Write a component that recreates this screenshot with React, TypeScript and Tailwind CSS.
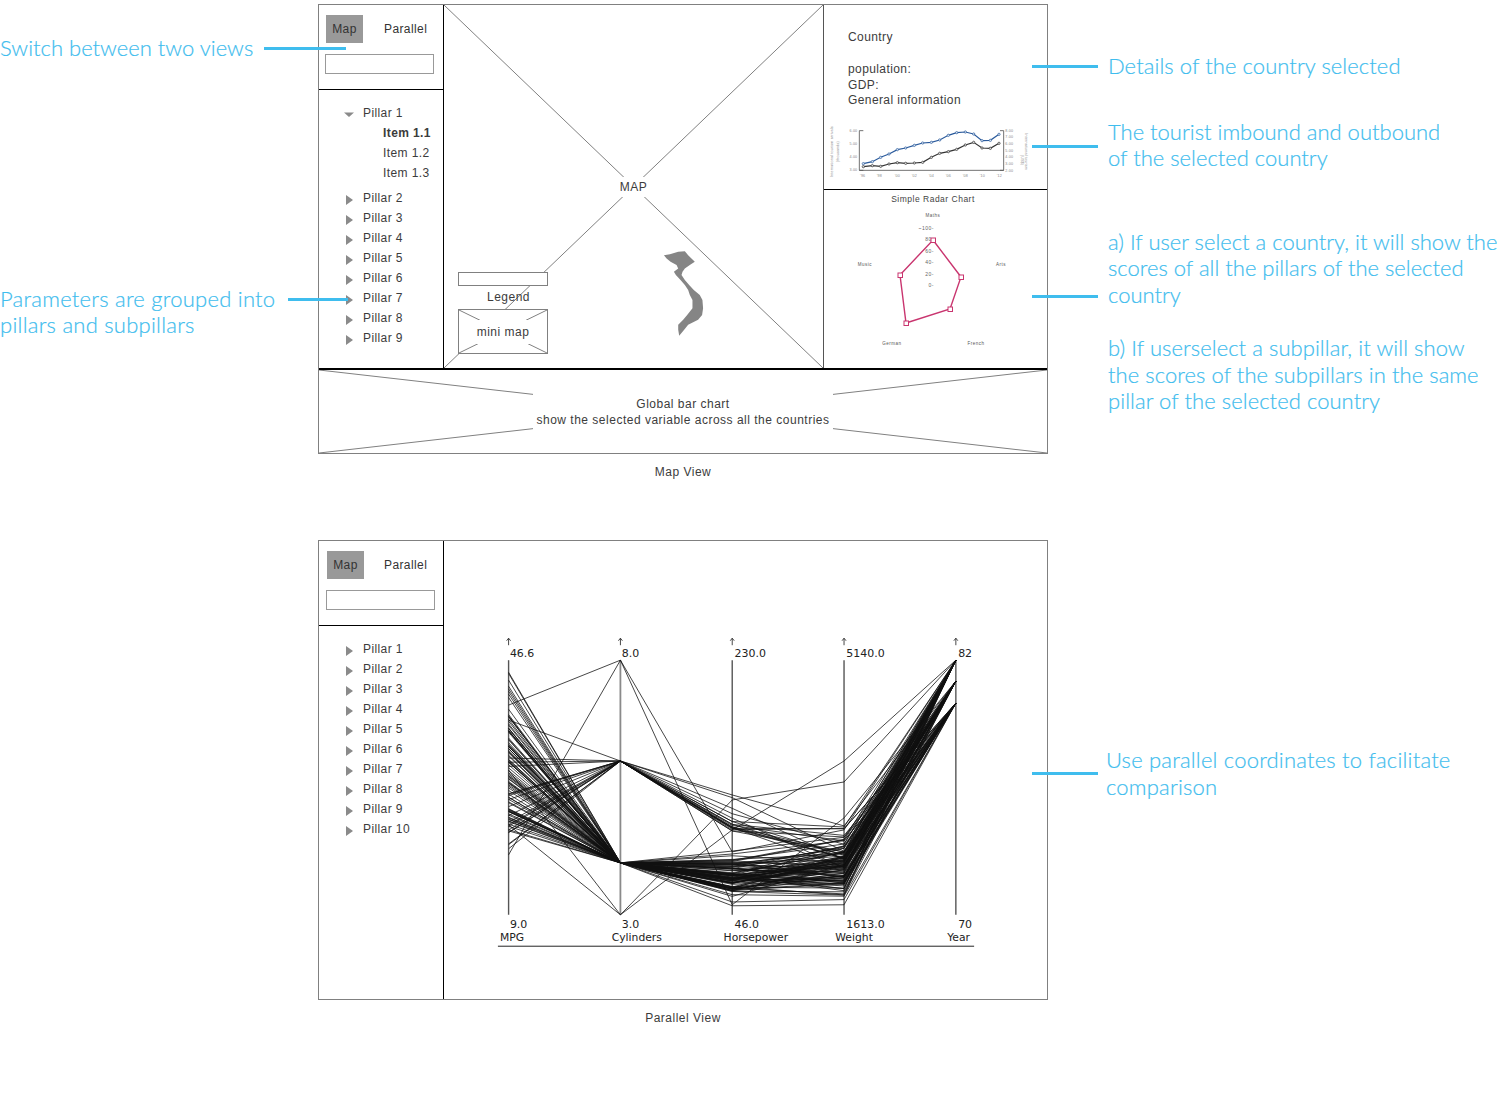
import type { ReactNode } from "react";

const AXES = [508.7, 620.7, 732.7, 844.7, 956.7];

function seeded(seed: number) {
  let a = seed;
  return () => {
    a = (a + 0x6d2b79f5) | 0;
    let t = Math.imul(a ^ (a >>> 15), 1 | a);
    t = (t + Math.imul(t ^ (t >>> 7), 61 | t)) ^ t;
    return ((t ^ (t >>> 14)) >>> 0) / 4294967296;
  };
}

// fake car data, pixel y per axis
function buildLines() {
  const rnd = seeded(41);
  const between = (a: number, b: number) => a + (b - a) * rnd();
  const years = [660, 681, 703];
  const lines: number[][] = [];
  for (let i = 0; i < 92; i++) {
    const hp = rnd() < 0.7 ? between(860, 892) : between(845, 906);
    const mpg = i % 12 === 0 ? between(672, 712) : between(712, 832);
    lines.push([mpg, 863, hp, hp * 0.7 + 258 + between(-24, 20), years[i % 3]]);
  }
  for (let i = 0; i < 18; i++) {
    const hp = i % 3 === 0 ? between(796, 822) : between(824, 832);
    const mpg = i < 3 ? between(756, 770) : between(790, 852);
    lines.push([mpg, 761, hp, between(820, 868), years[i % 3]]);
  }
  lines.push([855, 660, 852, 830, 660]);
  lines.push([705, 660, 905, 818, 681]);
  lines.push([770, 915, 830, 761, 660]);
  lines.push([825, 915, 800, 782, 660]);
  lines.push([720, 761, 795, 826, 681]);
  lines.push([680, 863, 906, 905, 703]);
  return lines;
}

const PARALLEL_LINES = buildLines();

function Cross() {
  return (
    <svg className="absolute inset-0 h-full w-full" viewBox="0 0 100 100" preserveAspectRatio="none">
      <line x1="0" y1="0" x2="100" y2="100" stroke="#808080" vectorEffect="non-scaling-stroke" />
      <line x1="100" y1="0" x2="0" y2="100" stroke="#808080" vectorEffect="non-scaling-stroke" />
    </svg>
  );
}

function Triangle({ open }: { open?: boolean }) {
  return (
    <svg width="10" height="10" viewBox="0 0 10 10" className="mt-[3px] shrink-0">
      {open ? <path d="M0 2.5h10L5 7z" fill="#8a8a8a" /> : <path d="M2 0l7 5-7 5z" fill="#8a8a8a" />}
    </svg>
  );
}

function PillarRow({ label, open }: { label: string; open?: boolean }) {
  return (
    <div className="flex h-5 items-center gap-[9px] pl-[25px]">
      <Triangle open={open} />
      <span>{label}</span>
    </div>
  );
}

function SideHeader({ shift, gap }: { shift: string; gap: string }) {
  return (
    <div className={`h-[85px] border-b border-black pt-[10px] ${shift}`}>
      <div className="flex h-7 items-center pl-[1px]">
        <div className="flex h-7 w-[37px] items-center justify-center bg-[#999999] text-[#333]">Map</div>
        <span className={`text-[#333] ${gap}`}>Parallel</span>
      </div>
      <div className="mt-[11px] h-5 w-[109px] border border-[#999999] bg-white" />
    </div>
  );
}

function Caption({ children }: { children: ReactNode }) {
  return <p className="mt-2 text-center">{children}</p>;
}

function Note({ children, className, lineClass }: { children: ReactNode; className?: string; lineClass?: string }) {
  return (
    <div className={`relative ${className ?? ""}`}>
      {children}
      {lineClass && <span className={`absolute z-10 h-[3px] bg-[#3fbdee] ${lineClass}`} />}
    </div>
  );
}

function VietnamShape() {
  return (
    <svg width="73" height="100" viewBox="0 0 220 300" className="absolute left-[206px] top-[235px]">
      <path
        d="M85 35 105 33 115 45 125 55 135 65 120 75 105 85 98 95 95 105 105 120 118 135 132 150 150 165 158 180 160 205 157 225 145 240 115 255 103 270 88 288 85 270 85 255 100 240 112 225 128 205 128 180 120 165 115 150 105 135 92 120 78 105 72 95 85 85 80 75 62 65 50 55 42 45 60 42Z"
        fill="#858585"
      />
    </svg>
  );
}

function LineChart() {
  const blue = "130,161 157,155 182,142 207,132 232,119 257,114 283,106 308,99 334,97 359,90 385,76 410,68 436,66 461,72 486,92 511,91 537,73";
  const black = "130,170 157,167 182,169 207,162 232,158 257,160 283,159 308,157 334,142 359,130 385,125 410,118 436,105 461,97 486,114 511,115 537,100";
  const pts = (s: string) => s.split(" ").map((p) => p.split(",").map(Number));
  return (
    <svg viewBox="0 0 672 210" width="224" height="70" className="block">
      {/* drawn in 3x crop units, y is offset by 27 */}
      <g transform="translate(-12 -27)" fontSize="11" fill="#888" fontFamily="Liberation Sans, sans-serif">
        <path d="M130 62h-12v119h12M540 62h11v119h-11" fill="none" stroke="#555" strokeWidth="2.5" />
        <path d="M118 181H551" stroke="#555" strokeWidth="2.5" />
        <polyline points={blue} fill="none" stroke="#2a5a9c" strokeWidth="3.5" />
        <polyline points={black} fill="none" stroke="#333" strokeWidth="3.5" />
        {pts(blue).map(([x, y]) => (
          <circle key={x} cx={x} cy={y} r="3.5" fill="#dce6f2" stroke="#2a5a9c" strokeWidth="2" />
        ))}
        {pts(black).map(([x, y]) => (
          <circle key={x} cx={x} cy={y} r="3.5" fill="#ddd" stroke="#333" strokeWidth="2" />
        ))}
        {[["6.00", 65], ["5.00", 105], ["4.00", 145], ["3.00", 184]].map(([t, y]) => (
          <text key={t} x="112" y={y} textAnchor="end">{t}</text>
        ))}
        {[["8.00", 65], ["7.00", 85], ["6.00", 105], ["5.00", 125], ["4.00", 145], ["3.00", 165], ["2.00", 185]].map(([t, y]) => (
          <text key={y} x="556" y={y}>{t}</text>
        ))}
        {[["'96", 128], ["'98", 178], ["'00", 232], ["'02", 283], ["'04", 334], ["'06", 385], ["'08", 436], ["'10", 487], ["'12", 538]].map(([t, x]) => (
          <text key={x} x={x} y="202" textAnchor="middle">{t}</text>
        ))}
        <text transform="translate(40 125) rotate(-90)" textAnchor="middle">International tourism arrivals</text>
        <text transform="translate(57 125) rotate(-90)" textAnchor="middle">(thousands)</text>
        <text transform="translate(616 125) rotate(90)" textAnchor="middle">International tourism</text>
        <text transform="translate(602 150) rotate(90)" textAnchor="middle">(US$)</text>
      </g>
    </svg>
  );
}

function RadarChart() {
  const shape = [[933, 240], [961, 277], [950, 309], [906, 323], [900, 275]];
  const ticks = [["100", 230], ["80", 241], ["60", 253], ["40", 264], ["20", 276], ["0", 287]];
  const labels = [["Maths", 933, 217], ["Arts", 1001, 266], ["French", 976, 345], ["German", 892, 345], ["Music", 865, 266]];
  return (
    <svg viewBox="824 190 224 178" width="224" height="178" className="block" fontFamily="Liberation Sans, sans-serif">
      <text x="933" y="202" fontSize="8.5" fill="#444" textAnchor="middle">Simple Radar Chart</text>
      {labels.map(([t, x, y]) => (
        <text key={t} x={x} y={y} fontSize="4.5" fill="#555" textAnchor="middle">{t}</text>
      ))}
      {ticks.map(([t, y]) => (
        <text key={t} x="934" y={y} fontSize="5" fill="#666" textAnchor="end">{t === "100" ? "~100" : t}-</text>
      ))}
      <polygon points={shape.map((p) => p.join(",")).join(" ")} fill="none" stroke="#c9356f" strokeWidth="1.4" />
      {shape.map(([x, y]) => (
        <rect key={x} x={x - 2} y={y - 2} width="4.5" height="4.5" fill="#fff" stroke="#c9356f" />
      ))}
    </svg>
  );
}

function ParallelChart() {
  const top = [["46.6", 510], ["8.0", 622], ["230.0", 735], ["5140.0", 847], ["82", 959]];
  const low = [["9.0", 510, "MPG", 500], ["3.0", 622, "Cylinders", 612], ["46.0", 735, "Horsepower", 724], ["1613.0", 847, "Weight", 836], ["70", 959, "Year", 948]];
  return (
    <svg viewBox="444 541 604 458" width="604" height="458" className="block tracking-normal" fontFamily="DejaVu Sans, sans-serif">
      {AXES.map((x, i) => (
        <g key={x}>
          <line x1={x} x2={x} y1="660" y2="915" stroke={i === 1 ? "#8a8a8a" : "#555"} strokeWidth={i === 1 ? 1.8 : 1.4} />
          <path d={`M${x} 645v-7m-2 2.5l2-2.5 2 2.5`} fill="none" stroke="#333" strokeWidth="0.9" />
        </g>
      ))}
      {PARALLEL_LINES.map((ys, i) => (
        <polyline
          key={i}
          points={ys.map((y, k) => `${AXES[k]},${y.toFixed(1)}`).join(" ")}
          fill="none"
          stroke="#111"
          strokeOpacity="0.78"
          strokeWidth="1"
        />
      ))}
      {top.map(([t, x]) => (
        <text key={t} x={x} y="657" fontSize="11" fill="#222">{t}</text>
      ))}
      {low.map(([t, x, name, nx]) => (
        <g key={t}>
          <text x={x} y="928" fontSize="11" fill="#222">{t}</text>
          <text x={nx} y="941" fontSize="10.8" fill="#222">{name}</text>
        </g>
      ))}
      <line x1="498" x2="975" y1="946.5" y2="946.5" stroke="#222" />
    </svg>
  );
}

function MapFrame() {
  const pillars = ["Pillar 2", "Pillar 3", "Pillar 4", "Pillar 5", "Pillar 6", "Pillar 7", "Pillar 8", "Pillar 9"];
  return (
    <div className="h-[450px] w-[730px] border border-[#808080]">
      <div className="flex h-[365px] border-b-2 border-black">
        {/* sidebar */}
        <div className="w-[125px] shrink-0 border-r border-black tracking-[0.4px]">
          <SideHeader shift="pl-[6px]" gap="ml-[21px]" />
          <div className="pt-[13px]">
            <PillarRow label="Pillar 1" open />
            <div className="flex h-5 items-center pl-[64px] font-bold">Item 1.1</div>
            <div className="flex h-5 items-center pl-[64px]">Item 1.2</div>
            <div className="flex h-5 items-center pl-[64px]">Item 1.3</div>
            <div className="mt-[5px]">
              {pillars.map((p) => (
                <PillarRow key={p} label={p} />
              ))}
            </div>
          </div>
        </div>

        {/* map */}
        <div className="relative flex flex-1 items-center justify-center">
          <Cross />
          <div className="relative bg-white px-[4px]">MAP</div>
          <VietnamShape />
          <div className="absolute left-[14px] top-[267px] h-[14px] w-[90px] border border-[#808080] bg-white" />
          <span className="absolute left-[43px] top-[284px] leading-4">Legend</span>
          <div className="absolute left-[14px] top-[304px] flex h-[45px] w-[90px] items-center justify-center border border-[#808080] bg-white">
            <Cross />
            <span className="relative bg-white px-[2px] py-[2px]">mini map</span>
          </div>
        </div>

        {/* country */}
        <div className="flex w-[224px] shrink-0 flex-col border-l border-[#555]">
          <div className="flex h-[185px] flex-col border-b border-black">
            <div className="pl-[24px] pt-[24px] leading-4 tracking-[0.4px]">
              <p>Country</p>
              <p className="mt-4">population:</p>
              <p>GDP:</p>
              <p className="-mt-[1px]">General information</p>
            </div>
            <div className="mt-auto">
              <LineChart />
            </div>
          </div>
          <RadarChart />
        </div>
      </div>

      <div className="relative flex h-[83px] items-center justify-center">
        <Cross />
        <div className="relative w-[300px] bg-white py-[3px] text-center leading-4">
          <p>Global bar chart</p>
          <p>show the selected variable across all the countries</p>
        </div>
      </div>
    </div>
  );
}

function ParallelFrame() {
  const pillars = ["Pillar 1", "Pillar 2", "Pillar 3", "Pillar 4", "Pillar 5", "Pillar 6", "Pillar 7", "Pillar 8", "Pillar 9", "Pillar 10"];
  return (
    <div className="flex h-[460px] w-[730px] border border-[#808080]">
      <div className="w-[125px] shrink-0 border-r border-black tracking-[0.4px]">
        <SideHeader shift="pl-[7px]" gap="ml-5" />
        <div className="pt-[13px]">
          {pillars.map((p) => (
            <PillarRow key={p} label={p} />
          ))}
        </div>
      </div>
      <ParallelChart />
    </div>
  );
}

export default function App() {
  return (
    <div className="h-[1100px] w-[1500px] overflow-hidden bg-white pt-[4px] font-['Liberation_Sans',Arial,sans-serif] text-[12px] leading-5 tracking-[0.5px] text-[#3c3c3c]">
      {/* map view */}
      <div className="flex h-[536px]">
        <aside className="w-[318px] shrink-0 font-[Lato,sans-serif] text-[22px] font-light leading-[26.5px] tracking-normal text-[#3fbdee] [-webkit-text-stroke:0.2px_#3fbdee]">
          <Note className="mt-[31px]" lineClass="left-[264px] top-[12px] w-[82px]">
            Switch between two views
          </Note>
          <Note className="mt-[224px] tracking-[0.25px]" lineClass="left-[288px] top-[12px] w-[60px]">
            <p>Parameters are grouped into</p>
            <p>pillars and subpillars</p>
          </Note>
        </aside>
        <div className="relative w-[730px] shrink-0">
          <MapFrame />
          <Caption>Map View</Caption>
        </div>
        <aside className="pl-[60px] font-[Lato,sans-serif] text-[22px] font-light leading-[26.5px] tracking-normal text-[#3fbdee] [-webkit-text-stroke:0.2px_#3fbdee]">
          <Note className="mt-[49px] tracking-[0.07px]" lineClass="left-[-76px] top-[12px] w-[66px]">
            Details of the country selected
          </Note>
          <Note className="mt-[39px]" lineClass="left-[-76px] top-[26px] w-[66px]">
            <p>The tourist imbound and outbound</p>
            <p>of the selected country</p>
          </Note>
          <Note className="mt-[57px]" lineClass="left-[-76px] top-[66px] w-[66px]">
            <p>a) If user select a country, it will show the</p>
            <p>scores of all the pillars of the selected</p>
            <p>country</p>
          </Note>
          <Note className="mt-[27px] tracking-[0.06px]">
            <p>b) If userselect a subpillar, it will show</p>
            <p>the scores of the subpillars in the same</p>
            <p>pillar of the selected country</p>
          </Note>
        </aside>
      </div>

      {/* parallel view */}
      <div className="flex">
        <div className="w-[318px] shrink-0" />
        <div className="w-[730px] shrink-0">
          <ParallelFrame />
          <Caption>Parallel View</Caption>
        </div>
        <aside className="pl-[58px] pt-[207px] font-[Lato,sans-serif] text-[22px] font-light leading-[26.5px] tracking-[0.2px] text-[#3fbdee] [-webkit-text-stroke:0.2px_#3fbdee]">
          <Note lineClass="left-[-74px] top-[25px] w-[66px]">
            <p>Use parallel coordinates to facilitate</p>
            <p>comparison</p>
          </Note>
        </aside>
      </div>
    </div>
  );
}
